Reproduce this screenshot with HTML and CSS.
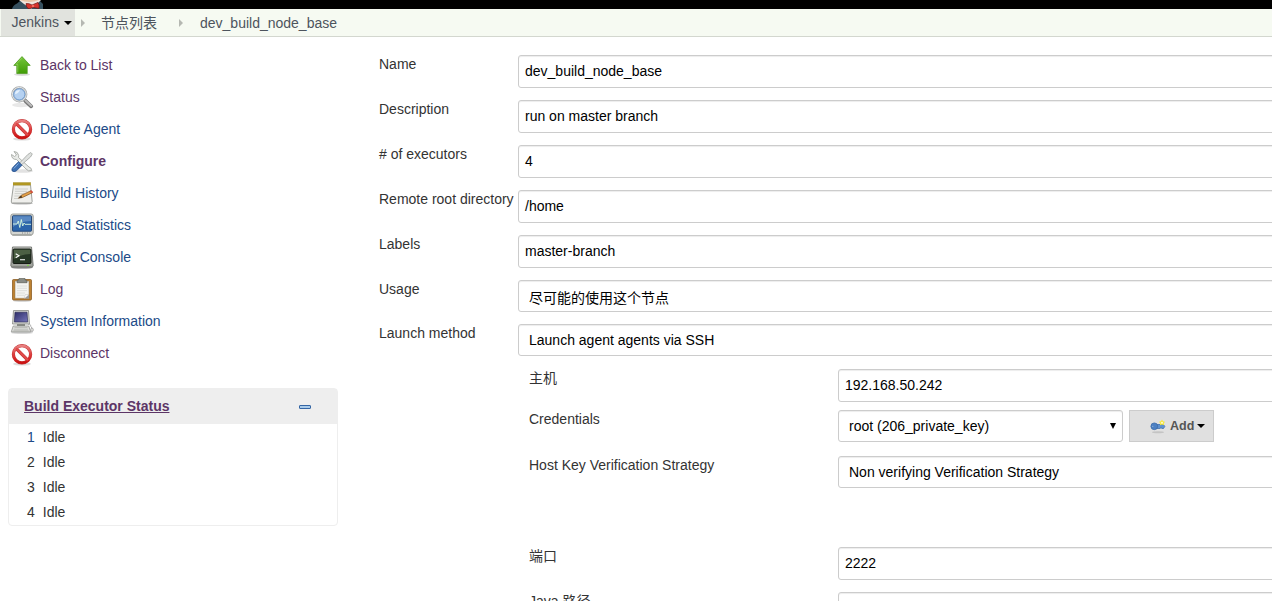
FILE: index.html
```html
<!DOCTYPE html>
<html lang="zh">
<head>
<meta charset="utf-8">
<title>dev_build_node_base</title>
<link rel="stylesheet" href="styles.css">
</head>
<body>
<svg class="defs" width="0" height="0">
  <defs>
    <linearGradient id="green" x1="0" y1="0" x2="0" y2="1"><stop offset="0" stop-color="#76c63a"/><stop offset="1" stop-color="#3f9c05"/></linearGradient>
    <linearGradient id="red" x1="0" y1="0" x2="0" y2="1"><stop offset="0" stop-color="#e88080"/><stop offset=".5" stop-color="#dd4040"/><stop offset="1" stop-color="#cc1010"/></linearGradient>
    <linearGradient id="metal" x1="0" y1="0" x2="0" y2="1"><stop offset="0" stop-color="#d4d6d1"/><stop offset="1" stop-color="#9b9e98"/></linearGradient>
    <linearGradient id="navy" x1="0" y1="0" x2="1" y2="1"><stop offset="0" stop-color="#2c2c68"/><stop offset="1" stop-color="#7777ba"/></linearGradient>
    <symbol id="prohibit" viewBox="0 0 24 24">
      <ellipse cx="12" cy="22" rx="9" ry="1.6" fill="#ddd"/>
      <circle cx="12" cy="12.3" r="8.6" fill="#fff" stroke="#c23030" stroke-width="3.2"/>
      <path d="M6 6.3 18 18.3" stroke="#c62a2a" stroke-width="3.2"/>
      <circle cx="12" cy="12.3" r="8.6" fill="none" stroke="url(#red)" stroke-width="2.4"/>
      <path d="M6 6.3 18 18.3" stroke="#df4a4a" stroke-width="2.3"/>
    </symbol>
  </defs>
</svg>
<header class="topbar">
  <svg class="logo" width="34" height="9" viewBox="0 0 34 9">
    <path d="M1 9Q2 5 6 3.5L9 1H29L32 4V9Z" fill="#36505f"/>
    <path d="M8 0H30L27 3 20 9 13 4Z" fill="#f1e6df"/>
    <path d="M9 0Q18 4 28 0Z" fill="#e9c3a5"/>
    <path d="M15 3.6Q18 3 21 5L27 2.4Q29 5 28 8.4L22 7.4 18 9Q15 8 15 3.6Z" fill="#d5332d" stroke="#6d1715" stroke-width=".7"/>
    <circle cx="22" cy="6" r="1.3" fill="#f26b60"/>
  </svg>
</header>
<nav class="crumbs">
  <a class="crumb home">Jenkins<i class="caret"></i></a>
  <i class="sep"></i>
  <a class="crumb list">节点列表</a>
  <i class="sep"></i>
  <a class="crumb node">dev_build_node_base</a>
</nav>
<div class="page">
  <aside class="side">
    <ul class="tasks">
      <li class="visited"><svg class="icon" viewBox="0 0 24 24"><ellipse cx="12" cy="21.5" rx="8" ry="1.5" fill="#ddd"/><path d="M12 3.6 20.2 12.4H17.2V20.6H6.8V12.4H3.8Z" fill="url(#green)" stroke="#4f9b20" stroke-width=".8"/><path d="M7.8 19.5V11.5H6L12 5" fill="none" stroke="#8fd05c" stroke-width=".8"/></svg>Back to List</li>
      <li class="visited"><svg class="icon" viewBox="0 0 24 24"><ellipse cx="11" cy="20" rx="9" ry="2.2" fill="#e8e8e8"/><path d="M15 15.5 21.2 21.3" stroke="#777" stroke-width="3.8" stroke-linecap="round"/><path d="M15.5 15.5 21.2 20.8" stroke="#bbb" stroke-width="2" stroke-linecap="round"/><circle cx="9.3" cy="9.3" r="7" fill="#b9d4f2" stroke="#a5a8a9" stroke-width="2.2"/><circle cx="9.3" cy="9.3" r="6.9" fill="none" stroke="#e6e8e8"/><circle cx="9.3" cy="9.3" r="5.6" fill="#b5d1f1" stroke="#628fc5" stroke-width=".8"/><path d="M5 9Q5 5 10 5Q8 9 5 9Z" fill="#e4f0fc"/></svg>Status</li>
      <li><svg class="icon"><use href="#prohibit"/></svg>Delete Agent</li>
      <li class="visited current"><svg class="icon low" viewBox="0 0 24 24"><ellipse cx="13" cy="21" rx="10" ry="1.7" fill="#e2e2e2"/><path d="M4 1.5Q8 1.5 8.7 5.5L8.5 7.5 19 17Q22 18 21.5 20.5Q18.5 22 16 19L6.5 9.5Q1.5 9.5 1.5 4.5L4.5 6.5 6.5 5Z" fill="#e9ebe8" stroke="#a6a9a4" stroke-width=".9"/><path d="M20.8 2.5 22.3 4 20.5 7 11 15.3 9.2 13.5 17.8 4.5Z" fill="#dfe1df" stroke="#a0a3a0" stroke-width=".8"/><path d="M8.5 11.8 12 15.2 6.5 20.8Q4 22.5 2 20.8 1.3 19 3.2 17Z" fill="#3d70b2" stroke="#244e8c" stroke-width=".8"/><path d="M8.5 13.5 3.8 18.5" stroke="#89afe0"/></svg>Configure</li>
      <li><svg class="icon" viewBox="0 0 24 24"><ellipse cx="12" cy="22.3" rx="11" ry="1.3" fill="#bbb"/><path d="M3.5 4H20.5L22.2 20.5Q22 22 20.5 22H2.5Q1 22 1.3 20Z" fill="#efefec" stroke="#888a85" stroke-width=".8"/><path d="M3 1.5H20.7V4.3H3Z" fill="#c9ad2a"/><path d="M4 1V4M6 1V4M8 1V4M10 1V4M12 1V4M14 1V4M16 1V4M18 1V4M20 1V4" stroke="#857114" stroke-width=".7"/><path d="M5 8H18M5 10.3H17M4.6 12.6H14M4.3 15H10M4 17.5H9" stroke="#c5c6c2" stroke-width=".8"/><path d="M8.5 17.2 11 14.4 21 9.7 22.4 11.7 12.4 16.5Z" fill="#e4a148" stroke="#7d4f22" stroke-width=".7"/><path d="M8.5 17.2 11 14.4 12.4 16.5Z" fill="#3b3022"/><path d="M19.8 10.2 21.5 9.3 23.2 11.3 21.3 12.3Z" fill="#d34f3f"/></svg>Build History</li>
      <li><svg class="icon" viewBox="0 0 24 24"><path d="M3 21H21L22 23H2Z" fill="#b9bbb7"/><rect x=".8" y="1" width="22.4" height="20.8" rx="2" fill="#d3d5d1" stroke="#898b87" stroke-width=".8"/><rect x="2.5" y="2.8" width="19" height="15.4" rx=".6" fill="#2c65ab" stroke="#244878"/><path d="M3 3.3H21V8Q10 8 3 14Z" fill="#5a89c2"/><path d="M3 11H7L8.3 8 9.8 14.5 11.3 6.5 12.7 13 14 10 15 11.3H21" fill="none" stroke="#d8f8df" stroke-width=".9"/><path d="M12 20H20" stroke="#858784" stroke-dasharray="1 1.5"/></svg>Load Statistics</li>
      <li><svg class="icon low" viewBox="0 0 24 24"><ellipse cx="12" cy="21.5" rx="11" ry="1.3" fill="#999"/><path d="M2.5 1H21.5L23.2 19.5Q23 21 21.5 21H2.5Q1 21 .8 19.5Z" fill="url(#metal)" stroke="#5d605b" stroke-width=".8"/><rect x="3" y="3" width="18" height="14.5" rx="1" fill="#263725" stroke="#171d15"/><path d="M3.8 3.8H20.3V8Q12 8 3.8 13Z" fill="#4c6044"/><path d="M5.7 7.7 9 9.7 5.7 11.7M10 13.7H15" fill="none" stroke="#fff" stroke-width="1.1"/><path d="M17 19.3H19" stroke="#7ade3a"/></svg>Script Console</li>
      <li class="visited"><svg class="icon low" viewBox="0 0 24 24"><ellipse cx="12" cy="22.8" rx="9" ry="1" fill="#ccc"/><rect x="2.5" y="1.5" width="19" height="20.5" rx="1" fill="#bd8131" stroke="#825216" stroke-width=".7"/><path d="M5 3H19V20.3H5Z" fill="#f4f4f1" stroke="#8a7450" stroke-width=".5"/><path d="M7 8H17M7 10.3H17M7 12.6H17M7 15H15M7 17.3H14" stroke="#d8d9d5" stroke-width=".8"/><path d="M19 16.5V20.5H14.5Z" fill="#999"/><path d="M14.5 20.5 15 16.8 19 16.5Z" fill="#fff" stroke="#aaa" stroke-width=".4"/><path d="M7 4.7V2.5L9 1.8V.4H15V1.8L17 2.5V4.7Z" fill="#898c86" stroke="#5b5e58" stroke-width=".7"/></svg>Log</li>
      <li><svg class="icon low" viewBox="0 0 24 24"><ellipse cx="12" cy="22.7" rx="11" ry="1" fill="#ccc"/><path d="M3.5 .5H18.5L19.5 14H2.5Z" fill="#d8d9d5" stroke="#888a85" stroke-width=".8"/><path d="M5 2.2H17L17.7 12H4.3Z" fill="url(#navy)" stroke="#23234e" stroke-width=".6"/><path d="M7 14H15V16.5H7Z" fill="#888a85"/><path d="M3.2 16H18.8L20.7 21.8H1.3Z" fill="#dedfdc" stroke="#858782" stroke-width=".7"/><path d="M4.4 17.5H17.5M3.8 19.2H18M3.3 20.7H18.7" stroke="#a6a8a3" stroke-width=".6"/><path d="M18 14.5Q21.5 14 21 17L22 18" fill="none" stroke="#999" stroke-width=".7"/><ellipse cx="22" cy="19.8" rx="1.3" ry="1.8" fill="#e2e2df" stroke="#888" stroke-width=".6"/></svg>System Information</li>
      <li class="visited"><svg class="icon low"><use href="#prohibit"/></svg>Disconnect</li>
    </ul>
    <section class="executors">
      <h2><a>Build Executor Status</a><span class="collapse"></span></h2>
      <ol>
        <li><a class="blue">1</a><span>Idle</span></li>
        <li><a>2</a><span>Idle</span></li>
        <li><a>3</a><span>Idle</span></li>
        <li><a>4</a><span>Idle</span></li>
      </ol>
    </section>
  </aside>
  <main class="form">
    <div class="row"><label>Name</label><div class="field">dev_build_node_base</div></div>
    <div class="row"><label>Description</label><div class="field">run on master branch</div></div>
    <div class="row"><label># of executors</label><div class="field">4</div></div>
    <div class="row"><label>Remote root directory</label><div class="field">/home</div></div>
    <div class="row"><label>Labels</label><div class="field">master-branch</div></div>
    <div class="row usage"><label>Usage</label><div class="field select cjk">尽可能的使用这个节点</div></div>
    <div class="row launch"><label>Launch method</label><div class="field select">Launch agent agents via SSH</div></div>
    <div class="nested">
      <div class="row host"><label>主机</label><div class="field">192.168.50.242</div></div>
      <div class="row cred"><label>Credentials</label>
        <div class="field select short">root (206_private_key)<i class="drop"></i></div>
        <button class="add"><svg width="16" height="16" viewBox="0 0 16 16"><ellipse cx="8" cy="14.3" rx="6" ry="1" fill="#c4c4c4"/><path d="M6 6.5H13.5L14.8 8.5 13.5 10.5H12L11 9.7 10 10.5H6Z" fill="#5e91d0" stroke="#3767a6" stroke-width=".7"/><circle cx="4.3" cy="8.3" r="3.4" fill="#4c80c2" stroke="#3767a6" stroke-width=".7"/><circle cx="2.8" cy="8.3" r=".6" fill="#9db9dd"/><path d="M12 1.6 13 3.3 15 3.8 13.8 5.4 14 7.3 12 6.6 10 7.3 10.2 5.4 9 3.8 11 3.3Z" fill="#f8e839"/><circle cx="12" cy="4.7" r="1" fill="#fffbd0"/></svg>Add<i class="caret"></i></button>
      </div>
      <div class="row strategy"><label>Host Key Verification Strategy</label><div class="field select">Non verifying Verification Strategy</div></div>
      <div class="row"><label>端口</label><div class="field">2222</div></div>
      <div class="row"><label>Java 路径</label><div class="field"></div></div>
    </div>
  </main>
</div>
</body>
</html>
```
FILE: styles.css
```css
* { box-sizing: border-box; }
html, body { height: 601px; overflow: hidden; }
body {
  margin: 0;
  background: #fff;
  color: #333;
  font: 14px/18px "Liberation Sans", Arial, "Noto Sans CJK SC", sans-serif;
}
ul, ol { list-style: none; margin: 0; padding: 0; }
.defs { display: block; }
.topbar { height: 9px; background: #000; padding-left: 11px; }
.logo { display: block; }

.crumbs {
  display: flex;
  align-items: center;
  height: 28px;
  padding-left: 1px;
  background: #f6faf2;
  border-bottom: 1px solid #d3d7cf;
  color: #4d545d;
}
.crumb { height: 27px; line-height: 29px; }
.home { display: flex; align-items: center; width: 74px; padding-left: 10.5px; background: #e1e3de; }
.list { width: 58px; margin: 0 20px 0 16px; }
.node { margin-left: 17px; }
.sep { border: 4px solid transparent; border-left: 4px solid #b5b8b2; border-right: 0; margin-left: 6px; }
.list + .sep { margin-left: 0; }
.caret { border: 4px solid transparent; border-top-color: #000; border-bottom: 0; }
.home .caret { margin-left: 5px; }

.page { display: flex; height: 564px; overflow: hidden; }
.side { width: 338px; flex: none; padding: 12px 0 0 8px; }
.tasks li { display: flex; align-items: center; height: 32px; padding-left: 2px; color: #204a87; }
.tasks .visited { color: #5c3566; }
.tasks .current { font-weight: bold; }
.icon { width: 24px; height: 24px; margin-right: 6px; flex: none; }
.icon.low { margin-top: 2px; }

.executors { margin-top: 19px; height: 138px; border: 1px solid #eee; border-radius: 4px; }
.executors h2 {
  display: flex;
  align-items: center;
  justify-content: space-between;
  height: 35px;
  margin: 0;
  padding: 0 26px 1px 15px;
  background: #eee;
  font-size: 14px;
  color: #5c3566;
}
.executors h2 a { text-decoration: underline; }
.collapse { width: 12px; height: 4px; border: 1px solid #3465a4; border-radius: 1px; background: #a9cbea; margin-top: 1px; }
.executors li { display: flex; height: 25px; align-items: center; padding-left: 18px; gap: 8px; }
.executors .blue { color: #204a87; }

.form { flex: none; width: 960px; padding: 18px 0 0 41px; }
.row { display: flex; height: 45px; }
.row label { width: 139px; flex: none; white-space: nowrap; }
.field {
  position: relative;
  flex: 1;
  height: 33px;
  padding: 0 6px;
  border: 1px solid #ccc;
  border-radius: 3px;
  box-shadow: inset 0 1px 1px rgba(0, 0, 0, .075);
  line-height: 31px;
  color: #000;
}
.select { height: 32px; padding-left: 10px; line-height: 31px; }
.cjk { line-height: 34px; }
.row.usage { height: 44px; }
.nested { padding-left: 150px; }
.nested .row label { width: 309px; }
.row.host { height: 41px; }
.row.cred { height: 46px; }
.row.strategy { height: 91px; }
.short { flex: 0 0 285px; }
.drop {
  position: absolute;
  right: 6px;
  top: 12px;
  border: 3.5px solid transparent;
  border-top: 6px solid #000;
  border-bottom: 0;
}
.add {
  display: flex;
  align-items: center;
  width: 85px;
  height: 32px;
  margin-left: 6px;
  padding: 0 0 0 20px;
  border: 1px solid #ccc;
  background: #e0e0e0;
  font: bold 12.5px "Liberation Sans", Arial, sans-serif;
  color: #555;
}
.add svg { margin-right: 4px; }
.add .caret { margin-left: 3px; }
```
